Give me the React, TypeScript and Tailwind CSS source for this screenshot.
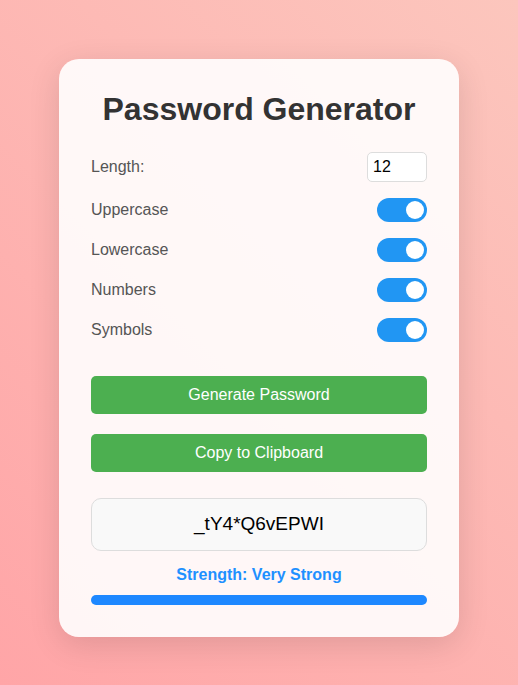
import React from "react";

const Toggle = () => (
  <div className="relative w-[50px] h-[24px] rounded-full bg-[#2196f3]">
    <div className="absolute top-[3px] right-[3px] w-[18px] h-[18px] rounded-full bg-white" />
  </div>
);

export default function App() {
  const opts = ["Uppercase", "Lowercase", "Numbers", "Symbols"];
  return (
    <div
      className="min-h-screen w-full flex justify-center items-start pt-[59px] pb-[49px] bg-[linear-gradient(45deg,#ffa5a7,#fcc6bd)]"
      style={{ fontFamily: '"Liberation Sans", Arial, sans-serif' }}
    >
      <div className="w-[400px] rounded-[20px] bg-white/90 p-8 shadow-[0_8px_32px_rgba(0,0,0,0.12)]">
        <h1 className="text-[32px] leading-[37px] font-bold text-[#333] text-center mb-6">
          Password Generator
        </h1>
        <div className="flex items-center justify-between mb-4">
          <span className="text-[16px] text-[#555]">Length:</span>
          <div className="w-[60px] h-[30px] border border-[#ddd] rounded-[5px] bg-white flex items-center px-[5px] text-[16px] text-black">
            12
          </div>
        </div>
        <div className="flex flex-col gap-4">
          {opts.map((o) => (
            <div key={o} className="flex items-center justify-between h-[24px]">
              <span className="text-[16px] text-[#555]">{o}</span>
              <Toggle />
            </div>
          ))}
        </div>
        <button className="mt-[34px] w-full h-[38px] rounded-[5px] bg-[#4caf50] text-white text-[16px] flex items-center justify-center">
          Generate Password
        </button>
        <button className="mt-[20px] w-full h-[38px] rounded-[5px] bg-[#4caf50] text-white text-[16px] flex items-center justify-center">
          Copy to Clipboard
        </button>
        <div className="mt-[26px] w-full h-[53px] rounded-[10px] border border-[#ddd] bg-[#f9f9f9] flex items-center justify-center text-[19px] text-black">
          _tY4*Q6vEPWI
        </div>
        <div className="mt-[14px] text-center text-[16px] leading-[20px] font-bold text-[#1e90ff]">
          Strength: Very Strong
        </div>
        <div className="mt-[10px] w-full h-[10px] rounded-[5px] bg-[#1e88ff]" />
      </div>
    </div>
  );
}
